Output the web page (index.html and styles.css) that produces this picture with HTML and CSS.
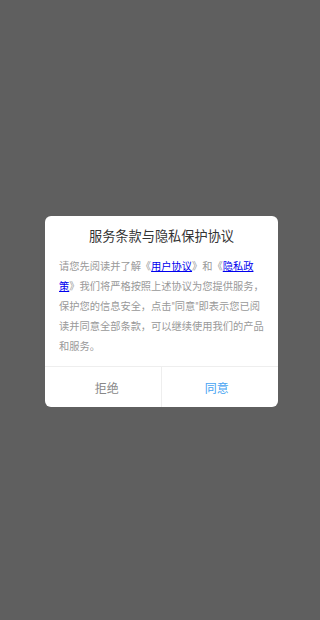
FILE: index.html
```html
<!DOCTYPE html>
<html lang="zh-CN">
<head>
<meta charset="utf-8">
<meta name="viewport" content="width=device-width, initial-scale=1">
<link rel="stylesheet" href="styles.css">
</head>
<body>
<div class="mask">
  <div class="dialog">
    <div class="title">服务条款与隐私保护协议</div>
    <div class="content">请您先阅读并了解《<a class="link" href="#">用户协议</a>》和《<a class="link" href="#">隐私政策</a>》我们将严格按照上述协议为您提供服务，保护您的信息安全，点击"同意"即表示您已阅读并同意全部条款，可以继续使用我们的产品和服务。</div>
    <div class="actions">
      <div class="btn btn-cancel">拒绝</div>
      <div class="btn btn-ok">同意</div>
    </div>
  </div>
</div>
</body>
</html>
```

FILE: styles.css
```css
html, body {
  margin: 0;
  padding: 0;
  height: 100%;
}
body {
  font-family: Roboto, "Noto Sans CJK SC", sans-serif;
  background: #5f5f5f;
}
.mask {
  height: 620px;
  display: flex;
  align-items: center;
  justify-content: center;
}
.dialog {
  width: 233px;
  margin-left: 3px;
  margin-top: 2px;
  background: #fff;
  border-radius: 6px;
  overflow: hidden;
}
.title {
  margin: 11.5px 0 9.5px;
  line-height: 20px;
  font-size: 13.2px;
  color: #333;
  text-align: center;
}
.content {
  padding: 0 12px 9px 14px;
  font-size: 10.24px;
  line-height: 20px;
  color: #999;
  line-break: strict;
}
.link {
  color: #0000ee;
  text-decoration: underline;
}
.actions {
  display: flex;
  border-top: 1px solid #eee;
  height: 40px;
}
.btn {
  box-sizing: border-box;
  width: 50%;
  display: flex;
  align-items: center;
  justify-content: center;
  padding-top: 2px;
  font-size: 12px;
}
.btn-cancel {
  color: #888;
  padding-left: 8px;
  border-right: 1px solid #eee;
}
.btn-ok {
  color: #44a3f2;
  padding-right: 6px;
}
```
